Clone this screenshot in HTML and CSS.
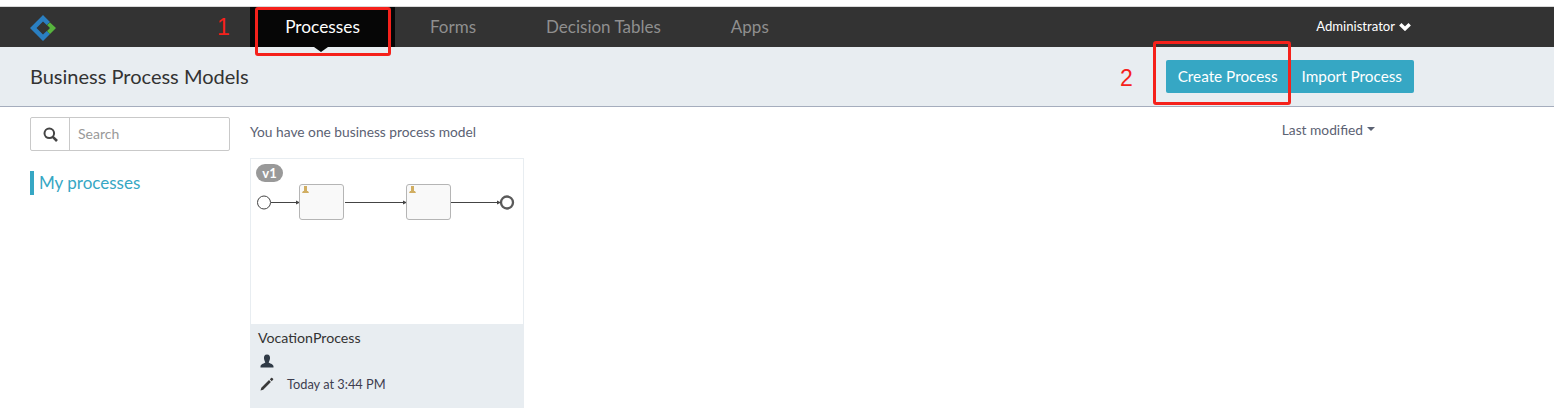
FILE: index.html
```html
<!DOCTYPE html>
<html lang="en">
<head>
<meta charset="utf-8">
<title>Business Process Models</title>
<link rel="stylesheet" href="styles.css">
</head>
<body>
<div class="page">
  <header class="navbar">
    <div class="brand">
      <svg width="28" height="30" viewBox="0 0 28 30" aria-hidden="true">
        <path d="M21 9 L14 2 L1 15 L14 28 L21 21 L17.700 18 L14 21.500 L7.500 15 L14 8.500 L17.700 12 Z" fill="#2a7fc1"/>
        <path d="M21 9.500 L27 15 L21 21 L18 18 L21 15 L18 12 Z" fill="#57b33e"/>
      </svg>
    </div>
    <nav class="tabs">
      <a class="tab active">Processes</a>
      <a class="tab">Forms</a>
      <a class="tab">Decision Tables</a>
      <a class="tab">Apps</a>
    </nav>
    <div class="user">Administrator
      <svg width="12" height="9" viewBox="0 0 12 9" aria-hidden="true"><path d="M1.300 2.200 L6 6.800 L10.700 2.200" fill="none" stroke="#fff" stroke-width="3.400"/></svg>
    </div>
  </header>

  <section class="subheader">
    <h1 class="title">Business Process Models</h1>
    <div class="actions">
      <button class="btn">Create Process</button>
      <button class="btn">Import Process</button>
    </div>
  </section>

  <main class="content">
    <aside class="sidebar">
      <div class="search">
        <span class="search-icon">
          <svg width="15" height="15" viewBox="0 0 15 15" aria-hidden="true"><circle cx="6.300" cy="6.300" r="4.800" fill="none" stroke="#444" stroke-width="2"/><path d="M9.800 9.800 L14 14" stroke="#444" stroke-width="2.600"/></svg>
        </span>
        <span class="search-input">Search</span>
      </div>
      <a class="side-link">My processes</a>
    </aside>

    <div class="models">
      <div class="models-head">
        <span class="count">You have one business process model</span>
        <span class="sort">Last modified <i class="caret"></i></span>
      </div>
      <article class="card">
        <div class="preview">
          <span class="badge">v1</span>
          <svg class="diagram" width="272" height="60" viewBox="0 0 272 60" aria-hidden="true">
            <g fill="none" stroke="#444" stroke-width="1">
              <circle cx="14" cy="29.500" r="6.500"/>
              <path d="M21 29.500 H48 M95 29.500 H155 M201 29.500 H250"/>
              <circle cx="257" cy="29.500" r="6" stroke="#5a5a5a" stroke-width="2.300"/>
            </g>
            <g fill="#444">
              <path d="M46 27.500 L50 29.500 L46 31.500 Z"/>
              <path d="M153 27.500 L157 29.500 L153 31.500 Z"/>
              <path d="M247 27.500 L251 29.500 L247 31.500 Z"/>
            </g>
            <g fill="#f9f9f9" stroke="#b5b5b5">
              <rect x="49.500" y="11.500" width="44" height="35" rx="2.500"/>
              <rect x="156.500" y="11.500" width="44" height="35" rx="2.500"/>
            </g>
            <g fill="#d1ae62">
              <path d="M52 20 L53 18 H54 V13 H57 V18 H58 L59 20 Z"/>
              <path d="M159 20 L160 18 H161 V13 H164 V18 H165 L166 20 Z"/>
            </g>
          </svg>
        </div>
        <div class="card-foot">
          <div class="card-name">VocationProcess</div>
          <div class="card-row">
            <svg width="14" height="14" viewBox="0 0 14 14" aria-hidden="true"><path d="M7 0.500 C9.500 0.500 10.200 2.500 10 4.500 C9.800 6.500 9 7.500 8.700 8.300 C9 9.500 13.500 10 13.500 12.500 V13.500 H0.500 V12.500 C0.500 10 5 9.500 5.300 8.300 C5 7.500 4.200 6.500 4 4.500 C3.800 2.500 4.500 0.500 7 0.500 Z" fill="#2f3a46"/></svg>
          </div>
          <div class="card-row">
            <svg width="14" height="14" viewBox="0 0 14 14" aria-hidden="true"><path d="M0.500 13.500 L1.300 10.800 L9 3.100 L10.900 5 L3.200 12.700 Z M9.800 2.300 L11.200 0.900 C11.500 0.600 11.900 0.600 12.200 0.900 L13.100 1.800 C13.400 2.100 13.400 2.500 13.100 2.800 L11.700 4.200 Z" fill="#3a3a3a"/></svg>
            <span class="card-date">Today at 3:44 PM</span>
          </div>
        </div>
      </article>
    </div>
  </main>

  <span class="mark mark-tab"></span>
  <span class="mark mark-btn"></span>
  <span class="num num-1">1</span>
  <span class="num num-2">2</span>
</div>
</body>
</html>
```

FILE: styles.css
```css
* { box-sizing: border-box; }

html, body {
  margin: 0;
  height: 100%;
  background: #fff;
  overflow: hidden;
}

.page {
  position: relative;
  width: 1554px;
  height: 418px;
  padding-top: 6px;
  font-family: Lato, "Liberation Sans", sans-serif;
  color: #333;
  overflow: hidden;
}

.navbar {
  display: flex;
  align-items: stretch;
  height: 41px;
  background: #333;
  border-top: 1px solid #d9d9d9;
  padding-right: 143px;
}

.brand {
  width: 250px;
  padding: 6px 0 0 29px;
}

.tabs {
  display: flex;
  flex: 1;
}

.tab {
  display: flex;
  align-items: center;
  justify-content: center;
  position: relative;
  height: 40px;
  padding: 0 35px 2px;
  font-size: 17px;
  color: #8f8f8f;
}

.tab.active {
  width: 145px;
  padding: 0 0 2px;
  background: #060606;
  color: #fff;
  font-size: 17.300px;
}

.tab.active::after {
  content: "";
  position: absolute;
  left: 64px;
  bottom: -5px;
  border-style: solid;
  border-width: 5px 7px 0;
  border-color: #060606 transparent transparent;
}

.user {
  display: flex;
  align-items: center;
  gap: 4px;
  padding-bottom: 2px;
  font-size: 13.100px;
  font-weight: 400;
  color: #fff;
}

.subheader {
  display: flex;
  align-items: center;
  justify-content: space-between;
  height: 60px;
  padding: 0 140px 0 30px;
  background: #e8edf1;
  border-bottom: 1px solid #a5adbd;
}

.title {
  margin: 0 0 2px;
  font-size: 20px;
  font-weight: 400;
  color: #333;
}

.actions { display: flex; }

.btn {
  height: 33px;
  padding: 0 12px 2px;
  border: 0;
  background: #36a7c4;
  color: #fff;
  font: 400 15.300px Lato, "Liberation Sans", sans-serif;
}

.btn:first-child { border-radius: 2px 0 0 2px; }
.btn:last-child { border-radius: 0 2px 2px 0; }

.content {
  display: flex;
  padding: 10px 0 0 30px;
}

.sidebar {
  width: 220px;
  flex: none;
}

.search {
  display: flex;
  width: 200px;
  height: 34px;
  border: 1px solid #c9c9c9;
  border-radius: 2px;
}

.search-icon {
  display: flex;
  align-items: center;
  justify-content: center;
  width: 39px;
  border-right: 1px solid #c9c9c9;
}

.search-input {
  padding-left: 8px;
  line-height: 31px;
  font-size: 14px;
  color: #999;
}

.side-link {
  display: block;
  margin-top: 20px;
  padding-left: 5px;
  height: 24px;
  line-height: 24px;
  border-left: 4px solid #36a7c4;
  font-size: 17px;
  color: #36a7c4;
}

.models { width: 1125px; }

.models-head {
  display: flex;
  justify-content: space-between;
  align-items: center;
  height: 28px;
  font-size: 13.750px;
  color: #5b6273;
}

.sort {
  display: flex;
  align-items: center;
  gap: 4px;
  margin-top: -4px;
}

.caret {
  border-style: solid;
  border-width: 4px 4px 0;
  border-color: #5b6273 transparent transparent;
}

.card {
  width: 274px;
  height: 250px;
  margin-top: 13px;
  border: 1px solid #e8edf1;
  border-bottom: 0;
}

.preview {
  position: relative;
  height: 165px;
  background: #fff;
}

.badge {
  position: absolute;
  left: 5px;
  top: 5px;
  width: 27px;
  height: 18px;
  border-radius: 9px;
  background: #999;
  color: #fff;
  text-align: center;
  font-size: 13px;
  font-weight: 700;
  line-height: 18px;
}

.diagram {
  position: absolute;
  left: -1px;
  top: 14px;
}

.card-foot {
  height: 84px;
  margin: 0 -1px;
  padding: 5px 8px;
  background: #e8edf1;
}

.card-name {
  margin-bottom: 3px;
  font-size: 14.200px;
  line-height: 17px;
  color: #333;
}

.card-row {
  display: flex;
  align-items: center;
  gap: 13px;
  height: 23px;
  padding-left: 2px;
}

.card-date {
  font-size: 12.800px;
  color: #3d3d4f;
}

.mark {
  position: absolute;
  border: 3px solid #f5211b;
  border-radius: 3px;
}

.mark-tab {
  left: 255px;
  top: 7px;
  width: 136px;
  height: 49px;
}

.mark-btn {
  left: 1153px;
  top: 41px;
  width: 138px;
  height: 64px;
}

.num {
  position: absolute;
  font-family: "Liberation Sans", sans-serif;
  font-size: 23px;
  line-height: 24px;
  color: #f5211b;
}

.num-1 { left: 217px; top: 15px; }
.num-2 { left: 1120px; top: 66px; }
```
